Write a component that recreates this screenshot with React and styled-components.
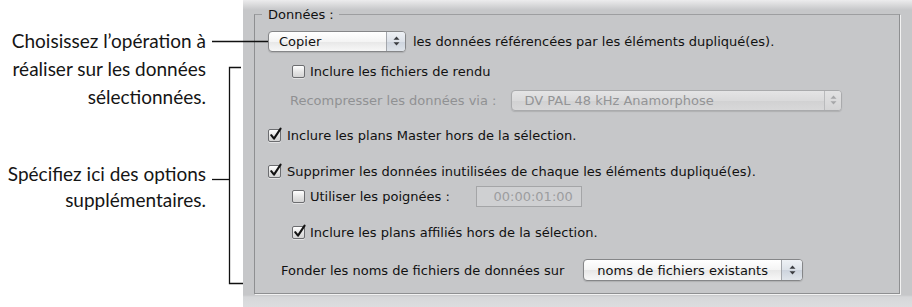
import React from 'react'
import styled, { createGlobalStyle } from 'styled-components'

const GlobalStyle = createGlobalStyle`
	html, body {
		margin: 0;
		padding: 0;
		background: #fff;
	}
	#root {
		width: 912px;
		height: 307px;
	}
`

const Page = styled.div`
	position: relative;
	display: flex;
	width: 912px;
	height: 307px;
	overflow: hidden;
	background: #fff;
`

const Notes = styled.div`
	flex: 0 0 243px;
	box-sizing: border-box;
	padding: 27px 37px 0 0;
	font-family: Lato, 'Open Sans', sans-serif;
	font-size: 19px;
	color: #151515;
	text-align: right;
`

const Note = styled.p`
	margin: ${p => p.$top || 0}px 0 0;
	line-height: ${p => p.$lh || 28}px;
`

const Leaders = styled.svg`
	position: absolute;
	left: 0;
	top: 0;
	pointer-events: none;
`

const Panel = styled.div`
	flex: 1;
	box-sizing: border-box;
	padding: 7px 12px 0 11px;
	background: linear-gradient(
		#ececed 0,
		#c6c7c9 10px,
		#c6c7c9 295px,
		#d6d7d9 297px,
		#dcdddf 100%
	);
	font-family: 'DejaVu Sans', Verdana, sans-serif;
	font-size: 13px;
	color: #111;
`

const Group = styled.fieldset`
	margin: 0;
	height: 287px;
	box-sizing: border-box;
	padding: 0 0 0 7px;
	border: 1px solid #8e8f91;
	border-top-color: #9d9ea0;
	box-shadow: 1px 1px 0 #f2f2f2;
`

const Legend = styled.legend`
	padding: 0 5px 0 6px;
	line-height: 15px;
	color: #111;
`

const Row = styled.div`
	display: flex;
	align-items: center;
	height: 22px;
	margin: ${p => p.$top || 0}px 0 0 ${p => p.$indent || 0}px;
	color: ${p => (p.$dim ? '#909193' : '#111')};
	white-space: nowrap;
`

const Box = styled.span`
	position: relative;
	flex: 0 0 auto;
	width: 11px;
	height: 11px;
	margin-right: ${p => p.$gap || 6}px;
	border: 1px solid #6c6d70;
	border-radius: 2px;
	background: linear-gradient(#ffffff, #e4e4e4 55%, #d4d4d4);
	box-shadow: 0 1px 0 rgba(255, 255, 255, 0.5);

	svg {
		position: absolute;
		left: 0;
		top: -3px;
		overflow: visible;
	}
`

const Select = styled.div`
	display: flex;
	align-items: stretch;
	flex: 0 0 auto;
	box-sizing: border-box;
	width: ${p => p.$width}px;
	height: ${p => p.$height || 21}px;
	margin-left: ${p => p.$gap || 0}px;
	margin-right: ${p => p.$after || 0}px;
	border: 1px solid ${p => (p.$disabled ? '#a9aaac' : '#858688')};
	border-radius: 4px;
	background: ${p =>
		p.$disabled
			? 'linear-gradient(#e4e4e5, #dadadb 50%, #d1d1d2 51%, #d8d8d9)'
			: 'linear-gradient(#ffffff, #f4f4f4 50%, #e7e7e7 51%, #f7f7f7)'};
	box-shadow: 0 1px 1px rgba(0, 0, 0, 0.12);
	overflow: hidden;
`

const SelectLabel = styled.span`
	flex: 1;
	display: flex;
	align-items: center;
	padding-left: ${p => p.$pad || 11}px;
	color: ${p => (p.$disabled ? '#939496' : '#111')};
`

const Arrows = styled.span`
	display: flex;
	align-items: center;
	justify-content: center;
	flex: 0 0 ${p => p.$width || 18}px;
	border-left: 1px solid ${p => (p.$disabled ? '#b9babc' : '#a3a6ab')};
	background: ${p =>
		p.$disabled
			? 'linear-gradient(#e2e2e3, #d4d4d5)'
			: 'linear-gradient(#eef1f5, #dde2e9 50%, #ccd3dd 51%, #dfe4ea)'};
`

const Field = styled.span`
	box-sizing: border-box;
	width: 106px;
	height: 21px;
	margin-left: ${p => p.$gap || 0}px;
	padding-right: 8px;
	border: 1px solid #a4a5a7;
	background: #cfd0d2;
	color: #9c9d9f;
	line-height: 19px;
	text-align: right;
`

const Check = ({ on, gap }) => (
	<Box $gap={gap}>
		{on && (
			<svg width='13' height='14' viewBox='0 0 13 14'>
				<path
					d='M2.2 8.2 L5 11.6 L11.6 1.6'
					fill='none'
					stroke='#141414'
					strokeWidth='2.1'
					strokeLinecap='round'
					strokeLinejoin='round'
				/>
			</svg>
		)}
	</Box>
)

const UpDown = ({ dim }) => (
	<svg width='7' height='10' viewBox='0 0 7 10'>
		<path d='M3.5 0.5 L6.5 3.8 H0.5 Z M3.5 9.5 L6.5 6.2 H0.5 Z' fill={dim ? '#a6a7a9' : '#3a3c40'} />
	</svg>
)

const Dropdown = ({ label, width, height, gap, after, disabled, pad, arrows }) => (
	<Select $width={width} $height={height} $gap={gap} $after={after} $disabled={disabled}>
		<SelectLabel $disabled={disabled} $pad={pad}>
			{label}
		</SelectLabel>
		<Arrows $disabled={disabled} $width={arrows}>
			<UpDown dim={disabled} />
		</Arrows>
	</Select>
)

export default function App() {
	return (
		<>
			<GlobalStyle />
			<Page>
				<Notes>
					<Note>
						Choisissez l’opération à
						<br />
						réaliser sur les données
						<br />
						sélectionnées.
					</Note>
					<Note $top={50} $lh={26}>
						Spécifiez ici des options
						<br />
						supplémentaires.
					</Note>
				</Notes>

				<Panel>
					<Group>
						<Legend>Données :</Legend>

						<Row $top={8} $indent={6}>
							<Dropdown label='Copier' width={138} gap={0} after={7} pad={10} />
							les données référencées par les éléments dupliqué(es).
						</Row>

						<Row $top={8} $indent={30}>
							<Check gap={5} />
							Inclure les fichiers de rendu
						</Row>

						<Row $top={7} $indent={28} $dim>
							Recompresser les données via :
							<Dropdown label='DV PAL 48 kHz Anamorphose' width={331} gap={15} disabled pad={12} arrows={16} />
						</Row>

						<Row $top={13} $indent={6}>
							<Check on />
							Inclure les plans Master hors de la sélection.
						</Row>

						<Row $top={14} $indent={6}>
							<Check on />
							Supprimer les données inutilisées de chaque les éléments dupliqué(es).
						</Row>

						<Row $top={3} $indent={30}>
							<Check gap={5} />
							Utiliser les poignées :
							<Field $gap={26}>00:00:01:00</Field>
						</Row>

						<Row $top={14} $indent={30}>
							<Check on gap={5} />
							Inclure les plans affiliés hors de la sélection.
						</Row>

						<Row $top={16} $indent={19}>
							Fonder les noms de fichiers de données sur
							<Dropdown label='noms de fichiers existants' width={220} height={22} gap={19} pad={13} arrows={20} />
						</Row>
					</Group>
				</Panel>

				<Leaders width='912' height='307' viewBox='0 0 912 307'>
					<g fill='none' stroke='#111' strokeWidth='1.3'>
						<path d='M212 41.5 H268' />
						<path d='M241 67.5 H229.5 V283.5 H243' />
						<path d='M212 179.5 H229.5' />
					</g>
				</Leaders>
			</Page>
		</>
	)
}
